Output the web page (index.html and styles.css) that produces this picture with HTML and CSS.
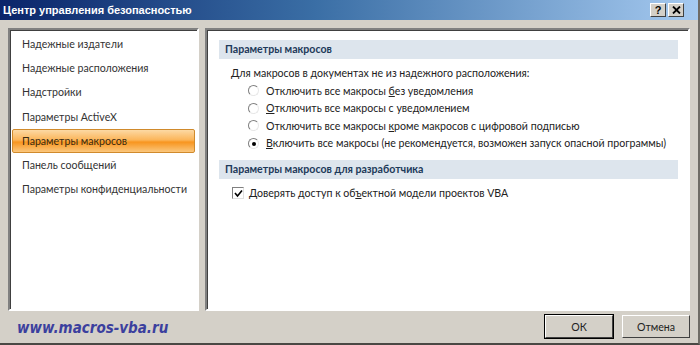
FILE: index.html
```html
<!DOCTYPE html>
<html lang="ru">

<head>
  <meta charset="UTF-8">
  <title>Центр управления безопасностью</title>
  <link rel="stylesheet" href="styles.css">
</head>

<body>
  <div class="window">
    <div class="titlebar">
      <span class="title">Центр управления безопасностью</span>
      <div class="caption-btns">
        <span class="cbtn">?</span>
        <span class="cbtn">
          <svg width="9" height="8" viewBox="0 0 9 8"><path d="M1 0.5 L8 7.5 M8 0.5 L1 7.5" stroke="#000" stroke-width="1.8"/></svg>
        </span>
      </div>
    </div>

    <div class="body">
      <!-- Список разделов -->
      <ul class="nav">
        <li>Надежные издатели</li>
        <li>Надежные расположения</li>
        <li>Надстройки</li>
        <li>Параметры ActiveX</li>
        <li class="active">Параметры макросов</li>
        <li>Панель сообщений</li>
        <li>Параметры конфиденциальности</li>
      </ul>

      <!-- Параметры -->
      <div class="content">
        <div class="group-head">Параметры макросов</div>
        <p class="intro">Для макросов в документах не из надежного расположения:</p>
        <div class="options">
          <label class="opt"><span class="radio"></span><span>Отключить все макросы <u>б</u>ез уведомления</span></label>
          <label class="opt"><span class="radio"></span><span><u>О</u>тключить все макросы с уведомлением</span></label>
          <label class="opt"><span class="radio"></span><span>Отключить все макросы <u>к</u>роме макросов с цифровой подписью</span></label>
          <label class="opt"><span class="radio checked"></span><span><u>В</u>ключить все макросы (не рекомендуется, возможен запуск опасной программы)</span></label>
        </div>

        <div class="group-head">Параметры макросов для разработчика</div>
        <label class="check-row">
          <span class="checkbox">
            <svg width="9" height="9" viewBox="0 0 9 9"><path d="M1 4 L3.5 7 L8 1.5" fill="none" stroke="#000" stroke-width="1.6"/></svg>
          </span>
          <span>Доверять доступ к об<u>ъ</u>ектной модели проектов VBA</span>
        </label>
      </div>
    </div>

    <div class="footer">
      <span class="site">www.macros-vba.ru</span>
      <div class="buttons">
        <button class="btn default">ОК</button>
        <button class="btn">Отмена</button>
      </div>
    </div>
  </div>
</body>

</html>
```

FILE: styles.css
```css
* {
  box-sizing: border-box;
  margin: 0;
  padding: 0;
}

body {
  width: 700px;
  height: 345px;
  overflow: hidden;
  font-family: Lato, "Noto Sans", sans-serif;
  font-size: 10.6px;
  color: #222;
}

.window {
  width: 700px;
  height: 345px;
  background: #d4d0c8;
  border-right: 2px solid #6f6c66;
  border-bottom: 2px solid #4a4844;
  display: flex;
  flex-direction: column;
}

.titlebar {
  height: 20px;
  background: linear-gradient(to right, #0a246a 0%, #3a6ea5 45%, #a6caf0 100%);
  display: flex;
  align-items: center;
  justify-content: space-between;
  padding: 0 14px 0 3px;
}

.title {
  color: #fff;
  font-family: "Liberation Sans", sans-serif;
  font-weight: bold;
  font-size: 11px;
}

.caption-btns {
  display: flex;
  gap: 2px;
}

.cbtn {
  width: 16px;
  height: 14px;
  background: #d4d0c8;
  border: 1px solid;
  border-color: #fff #404040 #404040 #fff;
  display: flex;
  align-items: center;
  justify-content: center;
  font-family: "Liberation Sans", sans-serif;
  font-weight: bold;
  font-size: 11px;
  color: #000;
}

.body {
  display: flex;
  gap: 6px;
  padding: 8px 8px 0 8px;
  height: 290px;
}

.nav {
  list-style: none;
  width: 191px;
  height: 283px;
  background: #fff;
  border: 2px solid;
  border-color: #808080 #fff #fff #808080;
  box-shadow: inset 1px 1px 0 #404040;
  padding: 2px 2px;
}

.nav li {
  height: 24.2px;
  line-height: 24px;
  padding-left: 10px;
  color: #333;
  white-space: nowrap;
}

.nav li.active {
  background: linear-gradient(to bottom, #fcd9a4 0%, #fbb55a 45%, #f8951f 55%, #fbc77d 100%);
  border: 1px solid #d08a2c;
  border-radius: 2px;
  line-height: 22px;
  padding-left: 9px;
  color: #3a2a10;
}

.content {
  flex: 1;
  height: 283px;
  background: #fff;
  border: 2px solid;
  border-color: #808080 #fff #fff #808080;
  box-shadow: inset 1px 1px 0 #404040;
  padding: 10px 10px 0 12px;
}

.group-head {
  background: #dde5ed;
  height: 19px;
  line-height: 19px;
  padding-left: 6px;
  font-weight: bold;
  color: #1d3a5a;
}

.intro {
  margin: 6px 0 0 12px;
  line-height: 17px;
}

.options {
  padding-left: 29px;
  margin-bottom: 8px;
}

.opt {
  display: flex;
  align-items: center;
  gap: 7px;
  height: 17.5px;
  white-space: nowrap;
}

.radio {
  flex: none;
  width: 11px;
  height: 11px;
  border-radius: 50%;
  border: 1px solid;
  border-color: #808080 #e8e8e8 #e8e8e8 #808080;
  background: #fff;
  position: relative;
}

.radio.checked::after {
  content: "";
  position: absolute;
  left: 3px;
  top: 3px;
  width: 4px;
  height: 4px;
  border-radius: 50%;
  background: #000;
}

.check-row {
  display: flex;
  align-items: center;
  gap: 5px;
  margin: 8px 0 0 13px;
}

.checkbox {
  flex: none;
  width: 12px;
  height: 12px;
  border: 1px solid;
  border-color: #808080 #e0e0e0 #e0e0e0 #808080;
  display: flex;
  align-items: center;
  justify-content: center;
}

.footer {
  flex: 1;
  display: flex;
  align-items: center;
  justify-content: space-between;
  padding: 0 8px 0 17px;
}

.site {
  color: #3b3f9e;
  font-family: "DejaVu Sans", sans-serif;
  font-stretch: condensed;
  font-style: italic;
  font-weight: bold;
  font-size: 15px;
  margin-top: 2px;
}

.buttons {
  display: flex;
  gap: 9px;
}

.btn {
  width: 68px;
  height: 23px;
  background: #d4d0c8;
  border: 1px solid;
  border-color: #fff #404040 #404040 #fff;
  font-family: Lato, sans-serif;
  font-size: 10.6px;
  color: #222;
}

.btn.default {
  outline: 1px solid #000;
}
```
